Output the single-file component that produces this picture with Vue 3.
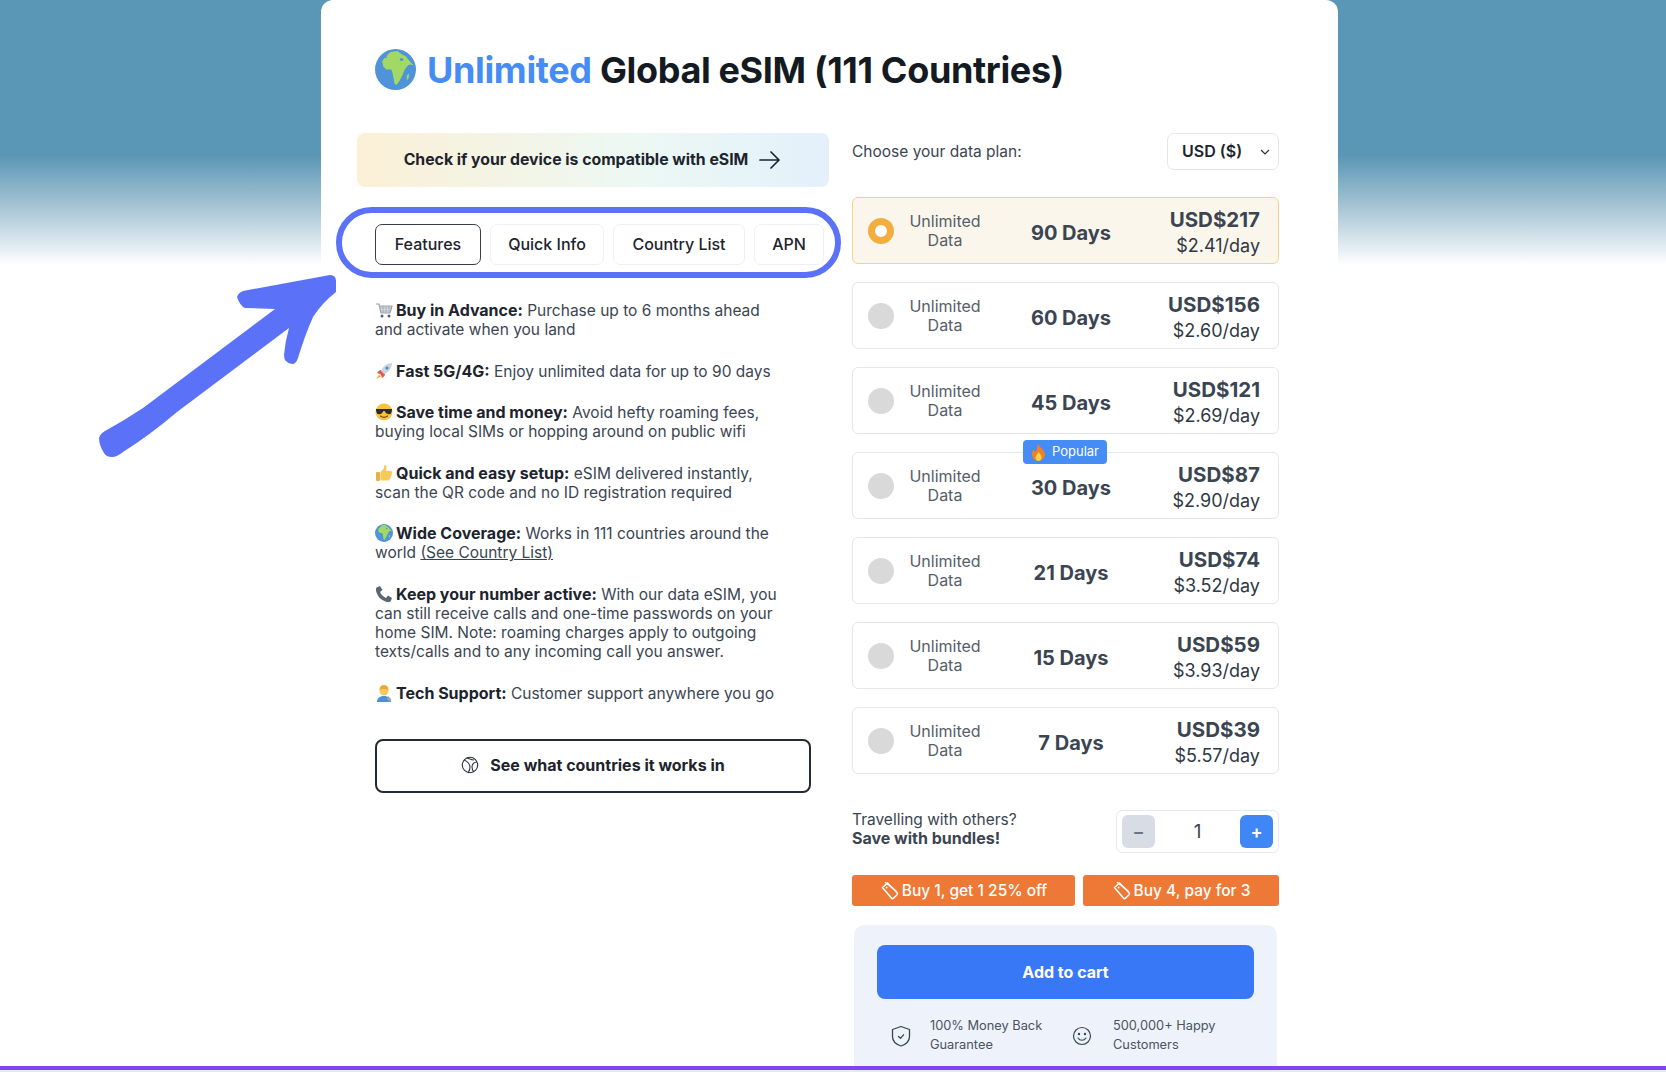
<script setup>
const tabs = ['Features', 'Quick Info', 'Country List', 'APN']
const plans = [
  { days: '90 Days', price: 'USD$217', per: '$2.41/day', active: true },
  { days: '60 Days', price: 'USD$156', per: '$2.60/day' },
  { days: '45 Days', price: 'USD$121', per: '$2.69/day' },
  { days: '30 Days', price: 'USD$87', per: '$2.90/day', popular: true },
  { days: '21 Days', price: 'USD$74', per: '$3.52/day' },
  { days: '15 Days', price: 'USD$59', per: '$3.93/day' },
  { days: '7 Days', price: 'USD$39', per: '$5.57/day' }
]
</script>

<template>
  <div class="page">
    <svg width="0" height="0" class="defs">
      <defs>
        <symbol id="earth" viewBox="0 0 40 40">
          <circle cx="20" cy="20" r="20" fill="#4f93d8" />
          <path d="M11 7l4-4 7-1 4 3 4 2 3 4 5 5-4-1-2 1-3 4-2 5-3 6-3 4-2-1-1-6-1-5-1-3-5 0-3-3-1-5 2-3 3-1z" fill="#a2d864" />
          <path d="M24 9l3 0 1 2-3 1z" fill="#4f93d8" />
          <path d="M31 26l2-2 0 4-2 3z" fill="#a2d864" />
        </symbol>
        <symbol id="tag" viewBox="0 0 20 20">
          <path d="M2.500 6.500l5-4.500 9.500 9.500a1.600 1.600 0 0 1 0 2.200l-3.400 3.400a1.600 1.600 0 0 1-2.200 0z" fill="none" stroke="currentColor" stroke-width="1.500" stroke-linejoin="round" />
          <path d="M5.500 1.500l10.500 8.500" fill="none" stroke="currentColor" stroke-width="1.300" stroke-linecap="round" />
          <circle cx="6.600" cy="6.500" r="1" fill="currentColor" />
        </symbol>
      </defs>
    </svg>

    <main class="card">
      <h1 class="title">
        <svg class="title-globe"><use href="#earth" /></svg>
        <span><span class="blue">Unlimited</span> Global eSIM (111 Countries)</span>
      </h1>

      <div class="columns">
        <section class="left">
          <a class="compat">
            <span>Check if your device is compatible with eSIM</span>
            <svg width="24" height="20" viewBox="0 0 24 20" fill="none" stroke="#1d242d" stroke-width="1.700" stroke-linecap="round" stroke-linejoin="round"><path d="M2 10h19M13 2l8 8-8 8" /></svg>
          </a>

          <nav class="tabs">
            <button v-for="(t, i) in tabs" :key="t" class="tab" :class="{ on: i === 0 }">{{ t }}</button>
          </nav>

          <div class="features">
            <p>
              <svg class="emo" viewBox="0 0 18 18"><path d="M1 3h3l2 9h9l2-7H5" fill="#dfe3e8" stroke="#9aa3ad" stroke-width="1.200" /><path d="M5 7h11M6 10h10M8 5v7M11 5v7M14 5v7" stroke="#9aa3ad" stroke-width=".7" /><circle cx="7" cy="15" r="1.500" fill="#58616b" /><circle cx="14" cy="15" r="1.500" fill="#58616b" /></svg>
              <b>Buy in Advance:</b> Purchase up to 6 months ahead<br />and activate when you land
            </p>
            <p>
              <svg class="emo" viewBox="0 0 18 18"><path d="M2 11c1-2 3-3 4-3l4 4c0 1-1 3-3 4l-1-3-1-1z" fill="#e2574c" /><path d="M6 9C8 4 12 1 17 1c0 5-3 9-8 11z" fill="#c9d3dc" /><circle cx="12" cy="6" r="1.500" fill="#3d8bd8" /><path d="M4 13l-3 4 4-2 1-1z" fill="#f5a623" /></svg>
              <b>Fast 5G/4G:</b> Enjoy unlimited data for up to 90 days
            </p>
            <p>
              <svg class="emo" viewBox="0 0 18 18"><circle cx="9" cy="9" r="8.500" fill="#f7c23c" /><path d="M1 6h16v1.500l-1 3c-1 1-4 1-5-.5L9.500 8h-1L7 10c-1 1.500-4 1.500-5 .5l-1-3z" fill="#2b2b2b" /><path d="M5.500 13c2 1.500 5 1.500 7 0" fill="none" stroke="#7a4a10" stroke-width="1.200" stroke-linecap="round" /></svg>
              <b>Save time and money:</b> Avoid hefty roaming fees,<br />buying local SIMs or hopping around on public wifi
            </p>
            <p>
              <svg class="emo" viewBox="0 0 18 18"><rect x="1" y="8" width="4" height="9" rx="1" fill="#e9b13f" /><path d="M5.500 8l3-3 1-4c2 0 2.500 2 2 4l-.5 2h4.500c2 0 2 2 1 3 .5 1 0 2-.8 2.500.2 1-.2 2-1 2.500 0 1-1 1.500-2 1.500H8c-1.500 0-2.500-.5-2.500-1z" fill="#f7c95a" /></svg>
              <b>Quick and easy setup:</b> eSIM delivered instantly,<br />scan the QR code and no ID registration required
            </p>
            <p>
              <svg class="emo"><use href="#earth" /></svg>
              <b>Wide Coverage:</b> Works in 111 countries around the<br />world <a class="link">(See Country List)</a>
            </p>
            <p>
              <svg class="emo" viewBox="0 0 18 18"><path d="M1.500 2.500L5 1l2.500 4L5 7c1 2.500 3 4.500 6 6l2-2.500 4 2.500-1.500 3.500c-1 1-3 1-5 0C6 15 3 12 1.500 7.500c-.7-2-.7-4 0-5z" fill="#5b6670" /></svg>
              <b>Keep your number active:</b> With our data eSIM, you<br />can still receive calls and one-time passwords on your<br />home SIM. Note: roaming charges apply to outgoing<br />texts/calls and to any incoming call you answer.
            </p>
            <p>
              <svg class="emo" viewBox="0 0 18 18"><path d="M2 18c0-4 3-6 7-6s7 2 7 6z" fill="#4a90d9" /><circle cx="9" cy="7" r="4.500" fill="#f7c95a" /><path d="M4.500 6C4.500 2 7 1 9 1s4.500 1 4.500 5C12 4.500 6 4.500 4.500 6z" fill="#e9a93a" /><path d="M13 12l3 3-2 3-2-3z" fill="#9aa3ad" /></svg>
              <b>Tech Support:</b> Customer support anywhere you go
            </p>
          </div>

          <button class="see">
            <svg width="18" height="18" viewBox="0 0 18 18" fill="none" stroke="#2a323c" stroke-width="1.100"><circle cx="9" cy="9" r="7.700" /><path d="M3 4c3 1 6 4 6 7s-1 4-2 6M6 2c3 1 5 2 7 2M16 6c-3 0-5 2-5 5 0 2 1 4 2 5" /></svg>
            <span>See what countries it works in</span>
          </button>
        </section>

        <section class="right">
          <div class="plan-head">
            <span>Choose your data plan:</span>
            <div class="select">
              <span>USD ($)</span>
              <svg width="10" height="6" viewBox="0 0 10 6" fill="none" stroke="#2a323c" stroke-width="1.200"><path d="M1 1l4 4 4-4" /></svg>
            </div>
          </div>

          <div class="plans">
            <div v-for="p in plans" :key="p.days" class="plan" :class="{ active: p.active }">
              <span v-if="p.popular" class="popular">
                <svg width="15" height="17" viewBox="0 0 15 17"><path d="M7 0c1 3 6 5 7 10 0 4-3 7-6.500 7S1 14 1 10c0-2 1-4 2-5 0 2 1 3 2 3 1-3 1-6 2-8z" fill="#f4811f" /><path d="M7.500 8c1 2 3 3 3 5.500 0 2-1.500 3.500-3 3.500s-3-1.500-3-3.500c0-2 2-3 3-5.500z" fill="#fcd34d" /></svg>
                Popular
              </span>
              <span class="radio"></span>
              <span class="unl">Unlimited<br />Data</span>
              <span class="days">{{ p.days }}</span>
              <span class="price"><b>{{ p.price }}</b><i>{{ p.per }}</i></span>
            </div>
          </div>

          <div class="bundle">
            <div class="bundle-text">Travelling with others?<br /><b>Save with bundles!</b></div>
            <div class="qty">
              <button class="q minus">−</button>
              <span class="num">1</span>
              <button class="q plus">+</button>
            </div>
          </div>

          <div class="offers">
            <div class="offer a"><svg width="20" height="20"><use href="#tag" /></svg>Buy 1, get 1 25% off</div>
            <div class="offer b"><svg width="20" height="20"><use href="#tag" /></svg>Buy 4, pay for 3</div>
          </div>

          <div class="cart">
            <button class="add">Add to cart</button>
            <div class="assure">
              <div class="as one">
                <svg width="20" height="22" viewBox="0 0 20 22" fill="none" stroke="#3b4552" stroke-width="1.300" stroke-linejoin="round"><path d="M10 1.500l8.500 3v7c0 4.500-4 8-8.500 9.500-4.500-1.500-8.500-5-8.500-9.500v-7z" /><path d="M7.500 11.500l2 1.800 3-3.500" stroke-linecap="round" /></svg>
                <span>100% Money Back<br />Guarantee</span>
              </div>
              <div class="as two">
                <svg width="20" height="20" viewBox="0 0 20 20" fill="none" stroke="#3b4552" stroke-width="1.200" stroke-linecap="round"><circle cx="10" cy="10" r="8.500" /><path d="M6 12c2 3 6 3 8 0" /><circle cx="7" cy="8" r=".6" fill="#3b4552" /><circle cx="13" cy="8" r=".6" fill="#3b4552" /></svg>
                <span>500,000+ Happy<br />Customers</span>
              </div>
            </div>
          </div>
        </section>
      </div>
    </main>

    <svg class="annot" width="1666" height="1072" viewBox="0 0 1666 1072">
      <rect x="339" y="210" width="499" height="65" rx="32.500" fill="none" stroke="#5b72f8" stroke-width="6" />
      <path d="M330 275Q336 275 336 281L336 292Q322 303 313 317Q305 335 298 358Q296 364 292 364Q284 363 284 355Q285 342 289 328L177 412Q150 435 123 452Q117 457 112 457Q106 457 104 453Q99 445 99 438Q100 434 105 431Q125 420 143 408L275 309L245 308Q240 306 237 297Q238 293 243 291Z" fill="#5b72f8" />
    </svg>
    <div class="strip"></div>
  </div>
</template>

<style scoped>
.page {
  position: relative;
  height: 1072px;
  overflow: hidden;
  background: linear-gradient(#5a96b5 0, #5a96b5 155px, #a3c3d3 205px, #e4edf3 248px, #fff 265px);
  font-family: Inter, "Noto Sans", sans-serif;
  color: #3b4552;
  font-size: 15.500px;
  line-height: 19.200px;
}
.defs { position: absolute; }
.card {
  box-sizing: border-box;
  width: 1017px;
  height: 1072px;
  margin-left: 321px;
  padding: 50px 59px 0 36px;
  background: #fff;
  border-radius: 12px 12px 0 0;
}
.title {
  margin: 0 0 42px 18px;
  height: 41px;
  display: flex;
  align-items: center;
  gap: 11px;
  font-size: 36px;
  line-height: 41px;
  font-weight: 700;
  letter-spacing: -0.350px;
  color: #141a22;
  white-space: nowrap;
}
.title-globe { width: 41px; height: 41px; flex: none; margin-top: -2px; }
.blue { color: #458cf4; }
.columns { display: flex; gap: 23px; align-items: flex-start; }
.left { width: 472px; flex: none; }
.right { width: 427px; flex: none; }
.compat {
  height: 54px;
  display: flex;
  align-items: center;
  justify-content: center;
  gap: 10px;
  border-radius: 8px;
  background: linear-gradient(90deg, #fbf0d6, #ecf8f3 60%, #e3f0fb);
  font-weight: 700;
  font-size: 15.800px;
  color: #1d242d;
}
.tabs { display: flex; gap: 9px; margin: 37px 0 0 18px; }
.tab {
  height: 41px;
  padding: 0 0 2px;
  background: #fff;
  border: 1px solid #eef0f5;
  border-radius: 7px;
  font: 500 16px Inter, sans-serif;
  color: #1d242d;
}
.tab:nth-child(1) { width: 106px; border-color: #3a3f46; }
.tab:nth-child(2) { width: 114px; }
.tab:nth-child(3) { width: 132px; }
.tab:nth-child(4) { width: 70px; }
.features { margin: 36px 0 0 18px; width: 440px; }
.features p { margin: 0 0 22.200px; }
.features b { font-weight: 700; font-size: 16px; color: #1d242d; }
.emo { width: 18px; height: 18px; vertical-align: -3px; margin-right: 3px; }
.link { text-decoration: underline; }
.see {
  box-sizing: border-box;
  display: flex;
  align-items: center;
  justify-content: center;
  gap: 11px;
  width: 436px;
  height: 54px;
  margin: 36px 0 0 18px;
  padding: 0 0 2px;
  background: #fff;
  border: 2px solid #232b35;
  border-radius: 8px;
  font: 700 16px Inter, sans-serif;
  color: #1d242d;
}
.plan-head { display: flex; align-items: center; justify-content: space-between; height: 37px; margin-bottom: 27px; }
.select {
  box-sizing: border-box;
  width: 112px;
  height: 37px;
  padding: 0 8px 0 14px;
  display: flex;
  align-items: center;
  justify-content: space-between;
  border: 1px solid #e5e7eb;
  border-radius: 7px;
  font-weight: 600;
  font-size: 16px;
  color: #1d242d;
}
.plans { display: flex; flex-direction: column; gap: 18px; }
.plan {
  position: relative;
  box-sizing: border-box;
  height: 67px;
  padding: 0 18px 0 15px;
  display: grid;
  grid-template-columns: 26px 102px 150px 1fr;
  align-items: center;
  border: 1px solid #e5e7eb;
  border-radius: 6px;
  background: #fff;
}
.plan.active { background: #fbf6ec; border-color: #f8cf8b; }
.radio { width: 26px; height: 26px; border-radius: 50%; background: #d9d9d9; box-sizing: border-box; }
.active .radio { background: #fff; border: 7px solid #f4ae3f; }
.unl { text-align: center; color: #555e69; font-size: 16px; line-height: 19px; }
.days { text-align: center; font-size: 20px; font-weight: 700; margin-top: 7px; }
.price { display: flex; flex-direction: column; align-items: flex-end; line-height: 26px; margin-top: 5px; }
.price b { font-size: 20.500px; font-weight: 700; }
.price i { font-style: normal; font-size: 18px; color: #2f3843; }
.popular {
  position: absolute;
  left: 170px;
  top: -13px;
  box-sizing: border-box;
  width: 84px;
  height: 24px;
  display: flex;
  align-items: center;
  justify-content: center;
  gap: 6px;
  background: #458cf4;
  border-radius: 4px;
  color: #fff;
  font-size: 13px;
}
.bundle { display: flex; justify-content: space-between; align-items: center; margin-top: 36px; height: 43px; }
.bundle-text { margin-top: -6px; line-height: 19px; }
.bundle-text b { font-weight: 700; font-size: 16px; }
.qty {
  box-sizing: border-box;
  width: 163px;
  height: 43px;
  padding: 0 5px;
  display: flex;
  align-items: center;
  justify-content: space-between;
  border: 1px solid #e6e9f2;
  border-radius: 6px;
}
.q {
  width: 33px;
  height: 33px;
  padding: 0;
  border: 0;
  border-radius: 6px;
  font: 600 18px Inter, sans-serif;
}
.minus { background: #d8dce5; color: #6b7480; }
.plus { background: #3f87f5; color: #fff; }
.num { font-size: 19px; }
.offers { display: flex; gap: 8px; margin-top: 22px; }
.offer {
  height: 31px;
  display: flex;
  align-items: center;
  justify-content: center;
  gap: 2px;
  background: #ee7937;
  border-radius: 3px;
  color: #fff;
  font-weight: 500;
  font-size: 15.500px;
}
.offer.a { width: 223px; }
.offer.b { width: 196px; }
.cart {
  box-sizing: border-box;
  width: 423px;
  height: 160px;
  margin: 19px 0 0 2px;
  padding: 20px 23px 0;
  background: #eef2fb;
  border-radius: 10px 10px 0 0;
}
.add {
  display: block;
  width: 377px;
  height: 54px;
  border: 0;
  border-radius: 8px;
  background: #3878f6;
  color: #fff;
  font: 700 16px Inter, sans-serif;
}
.assure { display: flex; margin-top: 18px; font-size: 12.800px; line-height: 18.500px; color: #4a535e; }
.as { display: flex; align-items: center; }
.as.one { width: 184px; padding-left: 14px; gap: 19px; box-sizing: border-box; }
.as.two { padding-left: 11px; gap: 21px; }
.annot { position: absolute; left: 0; top: 0; pointer-events: none; }
.strip {
  position: absolute;
  left: 0;
  right: 0;
  bottom: 0;
  height: 6px;
  background: #e8e8f0;
  border-top: 4px solid #8044f0;
  box-sizing: border-box;
}
</style>
